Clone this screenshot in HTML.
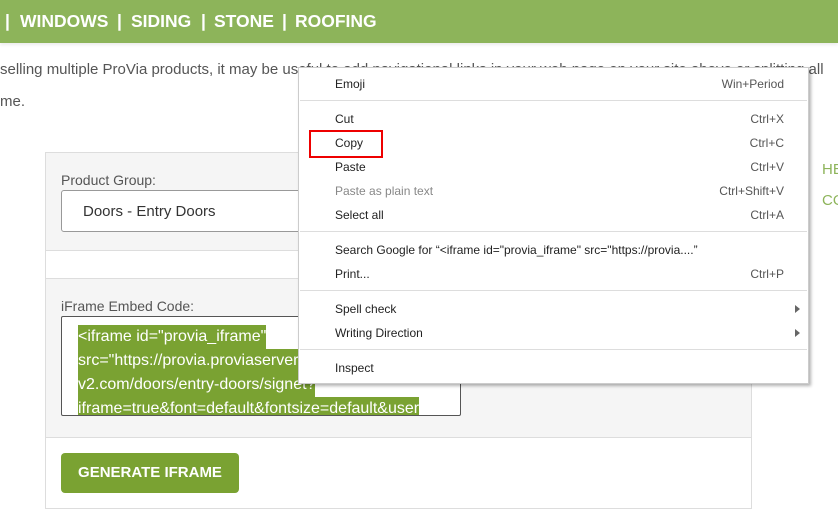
<!DOCTYPE html>
<html><head><style>
*{margin:0;padding:0;box-sizing:border-box}
body{width:838px;height:520px;overflow:hidden;background:#fff;font-family:"Liberation Sans",Arial,sans-serif;position:relative}
.hdr{position:absolute;left:0;top:0;width:838px;height:43px;background:#8db45a;color:#fff;font-weight:bold;font-size:17.5px;box-shadow:0 2px 3px rgba(0,0,0,.08)}
.hdr span{position:absolute;top:11px;white-space:nowrap}
.t{position:absolute;left:0;font-size:15px;color:#555;white-space:nowrap}
.box{position:absolute;left:45px;top:152px;width:707px;height:357px;border:1px solid #ddd;background:#fff}
.g{position:absolute;left:0;width:705px;background:#f5f5f5;border-bottom:1px solid #ddd}
.lbl{position:absolute;left:15px;font-size:14px;color:#555}
.sel{position:absolute;left:15px;top:37px;width:300px;height:42px;border:1px solid #999;border-radius:3px;background:#fff;font-size:15px;color:#333;padding:12px 0 0 21px}
.ta{position:absolute;left:15px;top:163px;width:400px;height:100px;border:1px solid #555;border-radius:2px;background:#fff;overflow:hidden;padding:8px 0 0 16px;font-size:16px;line-height:24px;color:#fff}
.ta span{background:#7aa232;white-space:nowrap;display:inline-block;height:24px}
.btn{position:absolute;left:15px;top:300px;width:178px;height:40px;background:#7aa232;border-radius:4px;color:#fff;font-weight:bold;font-size:15px;text-align:center;line-height:40px}
.menu{position:absolute;left:298px;top:67px;width:511px;height:317px;background:#fff;border:1px solid #ccc;box-shadow:2px 2px 3px rgba(0,0,0,.3);font-size:12px;color:#222}
.mi{position:absolute;left:36px;white-space:nowrap}
.sc{position:absolute;right:24px;white-space:nowrap;color:#555}
.dv{position:absolute;left:1px;right:1px;height:1px;background:#ddd}
.arr{position:absolute;right:8px;width:0;height:0;border-left:5px solid #666;border-top:4px solid transparent;border-bottom:4px solid transparent}
</style></head><body>
<div class="hdr"><span style="left:5px">|</span><span style="left:20px">WINDOWS</span><span style="left:117px">|</span><span style="left:131px">SIDING</span><span style="left:201px">|</span><span style="left:214px">STONE</span><span style="left:282px">|</span><span style="left:295px">ROOFING</span></div>
<div class="t" style="top:61px">selling multiple ProVia products, it may be useful to add navigational links in your web page on your site above or splitting all</div>
<div class="t" style="top:93px">me.</div>
<div style="position:absolute;left:822px;top:161px;color:#8db45a;font-size:15px">HE</div>
<div style="position:absolute;left:822px;top:192px;color:#8db45a;font-size:15px">CO</div>
<div class="box">
 <div class="g" style="top:0;height:98px"><div class="lbl" style="top:19px">Product Group:</div><div class="sel">Doors - Entry Doors</div></div>
 <div class="g" style="top:125px;height:160px;border-top:1px solid #ddd"><div class="lbl" style="top:19px">iFrame Embed Code:</div>
 <div class="ta" style="top:37px"><span>&lt;iframe id="provia_iframe" </span><br><span>src="https://provia.proviaserver-</span><br><span>v2.com/doors/entry-doors/signet?</span><br><span>iframe=true&amp;font=default&amp;fontsize=default&amp;user</span></div></div>
 <div class="btn">GENERATE IFRAME</div>
</div>
<div class="menu">
 <div class="mi" style="top:9px">Emoji</div><div class="sc" style="top:9px">Win+Period</div>
 <div class="dv" style="top:32px"></div>
 <div class="mi" style="top:44px">Cut</div><div class="sc" style="top:44px">Ctrl+X</div>
 <div class="mi" style="top:68px">Copy</div><div class="sc" style="top:68px">Ctrl+C</div>
 <div style="position:absolute;left:10px;top:62px;width:74px;height:28px;border:2px solid #e00"></div>
 <div class="mi" style="top:92px">Paste</div><div class="sc" style="top:92px">Ctrl+V</div>
 <div class="mi" style="top:116px;color:#888">Paste as plain text</div><div class="sc" style="top:116px">Ctrl+Shift+V</div>
 <div class="mi" style="top:140px">Select all</div><div class="sc" style="top:140px">Ctrl+A</div>
 <div class="dv" style="top:163px"></div>
 <div class="mi" style="top:175px">Search Google for “&lt;iframe id="provia_iframe" src="https://provia....”</div>
 <div class="mi" style="top:199px">Print...</div><div class="sc" style="top:199px">Ctrl+P</div>
 <div class="dv" style="top:222px"></div>
 <div class="mi" style="top:234px">Spell check</div><div class="arr" style="top:237px"></div>
 <div class="mi" style="top:258px">Writing Direction</div><div class="arr" style="top:261px"></div>
 <div class="dv" style="top:281px"></div>
 <div class="mi" style="top:293px">Inspect</div>
</div>
</body></html>
